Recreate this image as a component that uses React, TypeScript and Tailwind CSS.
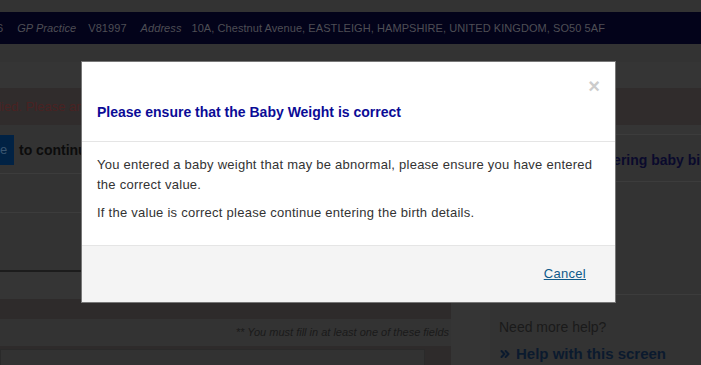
import { ChevronsRight } from 'lucide-react';

function HeaderBar() {
  return (
    <div className="h-[32px] shrink-0 bg-[#03031a] flex items-center text-[11px] tracking-[0.07px] text-[#4e4e55] whitespace-nowrap overflow-hidden">
      <span className="-ml-[3px]">6</span>
      <span className="italic ml-[14px]">GP Practice</span>
      <span className="ml-[12px]">V81997</span>
      <span className="italic ml-[14px]">Address</span>
      <span className="ml-[10px]">10A, Chestnut Avenue, EASTLEIGH, HAMPSHIRE, UNITED KINGDOM, SO50 5AF</span>
    </div>
  );
}

function MainColumn() {
  return (
    <div className="w-[451px] shrink-0 flex flex-col">
      <div className="h-[10px] shrink-0" />
      <div className="h-[30px] shrink-0 flex items-center">
        <div className="w-[14px] h-[30px] bg-[#012244] text-[#3a5570] text-[13px] flex items-center">e</div>
        <span className="ml-[5px] text-[14px] font-bold text-[#0c0c0c]">to continue</span>
      </div>
      <div className="h-[9px] shrink-0 border-b border-[#3c3c3c]" />
      <div className="h-[39px] shrink-0 border-b border-[#3c3c3c]" />
      <div className="h-[57px] shrink-0" />
      <div className="h-[2px] shrink-0 bg-[#1c1c1c]" />
      <div className="h-[27px] shrink-0 bg-[#353535]" />
      <div className="h-[20px] shrink-0 bg-[#2e2b2b]" />
      <div className="h-[27px] shrink-0 flex items-center justify-end pr-[2px] text-[11px] italic text-[#1a1a1a]">
        ** You must fill in at least one of these fields
      </div>
      <div className="flex-1 bg-[#2e2b2b] pt-[3px]">
        <div className="w-[425px] h-[30px] bg-[#323232] border border-[#2a2a2a]" />
      </div>
    </div>
  );
}

function SideColumn() {
  return (
    <div className="flex-1 flex flex-col overflow-hidden">
      <div className="h-[10px] shrink-0 bg-[#353535] border-b border-[#3c3c3c]" />
      <div className="h-[47px] shrink-0 border-b border-[#3c3c3c] flex items-center whitespace-nowrap pt-[5px]">
        <span className="ml-[36px] text-[14px] font-bold text-[#0a0a2c]">
          Help with entering baby birth details
        </span>
      </div>
      <div className="h-[76px] shrink-0 flex items-end">
        <span className="ml-[9px] text-[12px] underline text-[#111]">Related questions</span>
      </div>
      <div className="h-[37px] shrink-0 border-b border-[#3c3c3c]" />
      <div className="pl-[9px] pt-[22px] text-[14px] text-[#1a1a1a]">Need more help?</div>
      <div className="pl-[8px] pt-[5px] flex items-center gap-[4px] text-[#0b1a2e]">
        <ChevronsRight size={14} strokeWidth={3.5} />
        <span className="text-[15px] font-bold">Help with this screen</span>
      </div>
    </div>
  );
}

function Modal() {
  return (
    <div className="absolute left-[81px] top-[61px] w-[535px] bg-white border border-[#777] flex flex-col">
      <div className="px-[15px] pt-[14px] pb-[19px] border-b border-[#e5e5e5] flex flex-col">
        <button className="self-end text-[20px] leading-[20px] font-bold text-[#cccccc]">×</button>
        <h4 className="mt-[6px] text-[14px] leading-[20px] font-bold text-[#0b0b96]">
          Please ensure that the Baby Weight is correct
        </h4>
      </div>
      <div className="px-[15px] pt-[13px] pb-[22px] text-[13px] leading-[20px] tracking-[0.25px] text-[#333]">
        <p>You entered a baby weight that may be abnormal, please ensure you have entered the correct value.</p>
        <p className="mt-[8px]">If the value is correct please continue entering the birth details.</p>
      </div>
      <div className="h-[57px] bg-[#f4f4f4] border-t border-[#e5e5e5] flex items-center justify-end pr-[29px]">
        <a href="#" className="text-[13px] tracking-[0.3px] underline text-[#0f5a8a]">Cancel</a>
      </div>
    </div>
  );
}

export default function App() {
  return (
    <div
      className="relative w-[701px] h-[365px] overflow-hidden bg-[#333333] flex flex-col"
      style={{ fontFamily: '"Liberation Sans", Arial, sans-serif' }}
    >
      <div className="h-[12px] shrink-0" />
      <HeaderBar />
      <div className="h-[18px] shrink-0" />
      <div className="h-[26px] shrink-0 bg-[#353535]" />
      <div className="h-[37px] shrink-0 bg-[#302c2c] flex items-center text-[13px] text-[#4a2222] whitespace-nowrap overflow-hidden">
        <span className="-ml-[30px]">supplied. Please amend the fields marked below and try again.</span>
      </div>
      <div className="flex h-[240px] shrink-0">
        <MainColumn />
        <div className="w-[39px] shrink-0 bg-[#353535]" />
        <SideColumn />
      </div>
      <Modal />
    </div>
  );
}
